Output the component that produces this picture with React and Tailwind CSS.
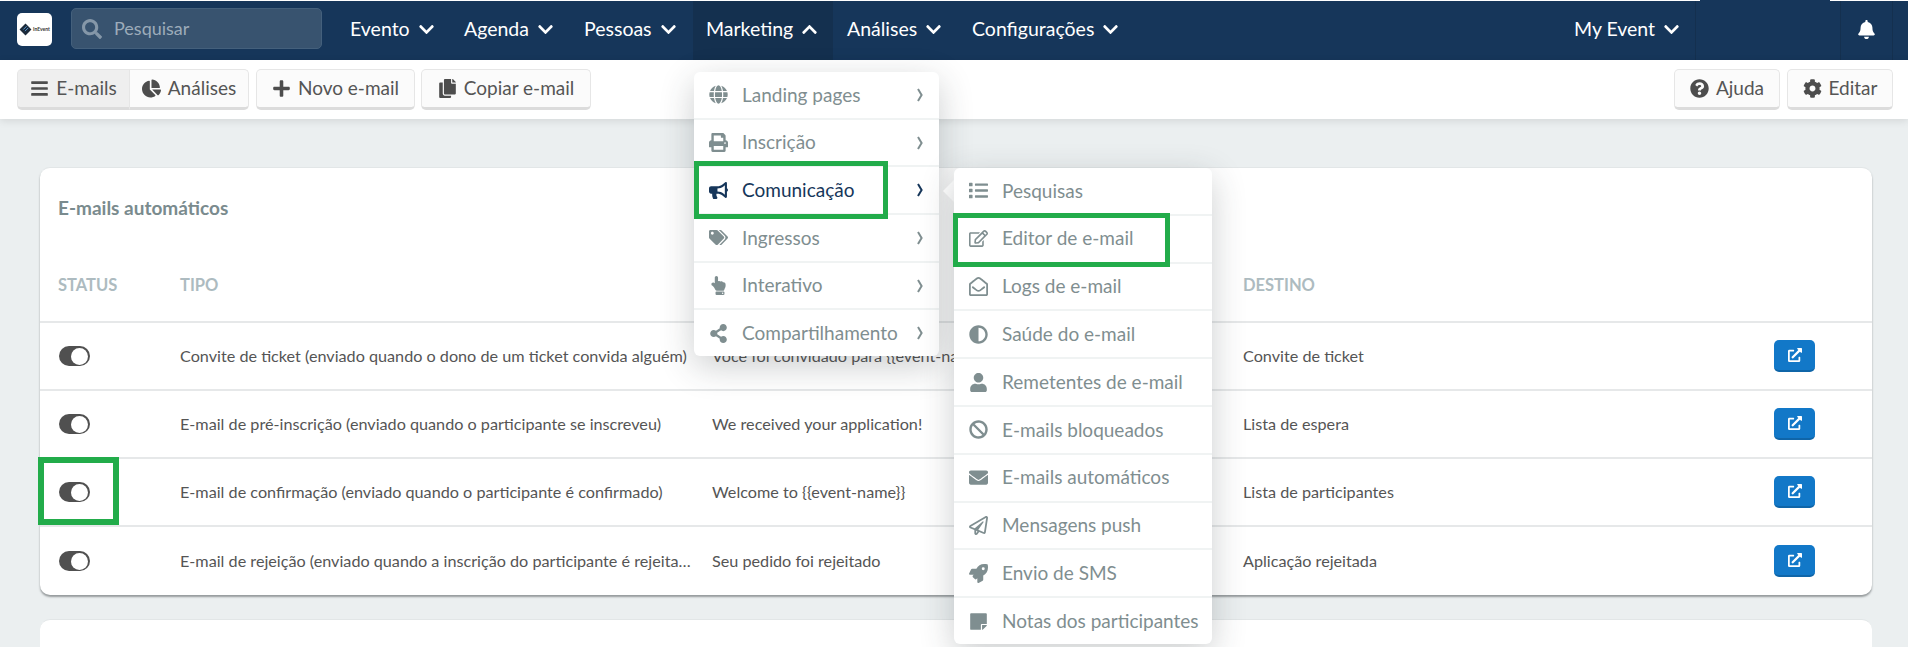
import {
  FaSearch, FaChevronDown, FaChevronUp, FaBell, FaBars, FaChartPie, FaPlus, FaCopy, FaQuestionCircle, FaCog,
  FaGlobe, FaPrint, FaBullhorn, FaTags, FaHandPointUp, FaShareAlt, FaList, FaRegEdit, FaRegEnvelopeOpen,
  FaAdjust, FaUser, FaBan, FaEnvelope, FaRegPaperPlane, FaRocket, FaStickyNote, FaExternalLinkAlt,
} from "react-icons/fa"

const NAV = [
  { label: "Evento", cls: "w-[114px]" },
  { label: "Agenda", cls: "w-[120px]" },
  { label: "Pessoas", cls: "w-[109px]" },
  { label: "Marketing", cls: "w-[140px] pl-[13px] bg-[#14304f]", open: true },
  { label: "Análises", cls: "w-[139px] pl-[14px]" },
  { label: "Configurações", cls: "" },
]

const MENU_MARKETING = [
  { label: "Landing pages", icon: FaGlobe },
  { label: "Inscrição", icon: FaPrint },
  { label: "Comunicação", icon: FaBullhorn, active: true },
  { label: "Ingressos", icon: FaTags },
  { label: "Interativo", icon: FaHandPointUp },
  { label: "Compartilhamento", icon: FaShareAlt },
]

const MENU_COMUNICACAO = [
  { label: "Pesquisas", icon: FaList },
  { label: "Editor de e-mail", icon: FaRegEdit },
  { label: "Logs de e-mail", icon: FaRegEnvelopeOpen },
  { label: "Saúde do e-mail", icon: FaAdjust },
  { label: "Remetentes de e-mail", icon: FaUser },
  { label: "E-mails bloqueados", icon: FaBan },
  { label: "E-mails automáticos", icon: FaEnvelope },
  { label: "Mensagens push", icon: FaRegPaperPlane },
  { label: "Envio de SMS", icon: FaRocket },
  { label: "Notas dos participantes", icon: FaStickyNote },
]

const ROWS = [
  { tipo: "Convite de ticket (enviado quando o dono de um ticket convida alguém)", assunto: "Você foi convidado para {{event-name}}", destino: "Convite de ticket" },
  { tipo: "E-mail de pré-inscrição (enviado quando o participante se inscreveu)", assunto: "We received your application!", destino: "Lista de espera" },
  { tipo: "E-mail de confirmação (enviado quando o participante é confirmado)", assunto: "Welcome to {{event-name}}", destino: "Lista de participantes" },
  { tipo: "E-mail de rejeição (enviado quando a inscrição do participante é rejeitada)", assunto: "Seu pedido foi rejeitado", destino: "Aplicação rejeitada" },
]

function Angle({ className }) {
  return (
    <svg viewBox="0 0 6 14" className={className} fill="none" stroke="currentColor" strokeWidth="2">
      <path d="M1 1 L4.6 7 L1 13" />
    </svg>
  )
}

function Btn({ icon: Icon, children, className = "bg-[#fbfbfb]" }) {
  return (
    <button className={`h-[41px] flex items-center justify-center gap-[7px] rounded-[5px] border border-[#e6e6e6] border-b-[3px] border-b-[#dcdcdc] text-[19px] text-[#555] ${className}`}>
      <Icon className="text-[#4d4d4d] text-[19px]" />
      {children}
    </button>
  )
}

function Toggle() {
  return (
    <div className="w-[31px] h-[20px] rounded-full bg-[#505050] flex items-center justify-end pr-[2px]">
      <div className="w-[17px] h-[17px] rounded-full bg-white" />
    </div>
  )
}

function Dropdown({ items, chevrons, className }) {
  return (
    <div className={`absolute bg-white rounded-[6px] shadow-[0_10px_34px_rgba(40,50,55,0.24)] flex flex-col ${className}`}>
      {items.map((m, i) => {
        const Icon = m.icon
        const color = m.active ? "text-[#16365a]" : "text-[#7f8e90]"
        return (
          <div key={m.label} className={`flex-1 flex items-center ${color} ${i < items.length - 1 ? "border-b-2 border-[#f0f3f3]" : ""}`}>
            <div className="w-[48px] flex justify-center">
              <Icon className="text-[19px]" />
            </div>
            <span className="text-[19px] whitespace-nowrap">{m.label}</span>
            {chevrons && <Angle className="ml-auto mr-[16px] w-[6px] h-[14px]" />}
          </div>
        )
      })}
    </div>
  )
}

export default function App() {
  return (
    <div className="h-[658px] bg-white overflow-hidden font-['Lato',sans-serif]">
      <div className="relative h-[647px] bg-[#ebeff0] flex flex-col overflow-hidden">
        <div className="h-px bg-white shrink-0" />

        {/* top nav */}
        <header className="h-[59px] shrink-0 bg-[#16365a] flex items-center text-white relative">
          <div className="ml-[17px] mb-[2px] w-[35px] h-[33px] rounded-[5px] bg-white flex items-center justify-center gap-[1px]">
            <svg viewBox="0 0 12 12" className="w-[13px] h-[13px]">
              <path d="M6 0.5 L11.5 6 L6 11.5 L0.5 6 Z" fill="#1c2a3a" />
              <path d="M4 6 L7 3 M5.5 7.5 L8.5 4.5" stroke="#5a9bd8" strokeWidth="0.9" />
            </svg>
            <span className="text-[5px] font-bold text-[#333] leading-none">InEvent</span>
          </div>
          <div className="ml-[19px] mb-[4px] w-[251px] h-[41px] rounded-[5px] bg-[#38536f] border border-[#44607c] flex items-center text-[#9dacba] text-[18px]">
            <FaSearch className="ml-[10px] text-[20px] text-[#8597a8]" />
            <span className="ml-[12px]">Pesquisar</span>
          </div>
          <nav className="ml-[28px] flex h-full">
            {NAV.map((n) => (
              <div key={n.label} className={`flex items-center gap-[8px] text-[19.5px] pb-[3px] ${n.cls}`}>
                {n.label}
                {n.open ? <FaChevronUp className="text-[17px]" /> : <FaChevronDown className="text-[17px]" />}
              </div>
            ))}
          </nav>
          <div className="ml-auto flex h-full">
            <div className="w-[121px] flex items-center gap-[8px] text-[19.5px] pb-[3px]">
              My Event
              <FaChevronDown className="text-[17px]" />
            </div>
            <div className="w-[146px] border-x border-[#14304f]" />
            <div className="w-[52px] flex items-center justify-center border-r border-[#14304f] pb-[3px]">
              <FaBell className="text-[19px]" />
            </div>
            <div className="w-[15px]" />
          </div>
          <div className="absolute -top-px left-[1700px] w-[130px] h-px bg-[#16365a]" />
        </header>

        {/* toolbar */}
        <div className="h-[59px] shrink-0 bg-white shadow-[0_2px_8px_rgba(0,0,0,0.1)] relative flex items-center pl-[17px] pr-[15px]">
          <div className="flex">
            <Btn icon={FaBars} className="w-[113px] rounded-r-none bg-[#efefef]">E-mails</Btn>
            <Btn icon={FaChartPie} className="w-[119px] rounded-l-none border-l-0 bg-[#fbfbfb]">Análises</Btn>
          </div>
          <Btn icon={FaPlus} className="ml-[7px] w-[159px] bg-[#fbfbfb]">Novo e-mail</Btn>
          <Btn icon={FaCopy} className="ml-[6px] w-[170px] bg-[#fbfbfb]">Copiar e-mail</Btn>
          <Btn icon={FaQuestionCircle} className="ml-auto w-[106px] bg-[#fbfbfb]">Ajuda</Btn>
          <Btn icon={FaCog} className="ml-[7px] w-[106px] bg-[#fbfbfb]">Editar</Btn>
        </div>

        {/* main */}
        <main className="pt-[48px] pl-[40px] pr-[36px]">
          <section className="bg-white rounded-[10px] border-t border-[#e2e6e7] shadow-[0_2px_2px_rgba(80,85,88,0.55)]">
            <h2 className="h-[82px] flex items-center pl-[18px] pb-px text-[19px] font-bold text-[#7a8b8e]">E-mails automáticos</h2>
            <div className="h-[73px] flex items-center pl-[18px] text-[16.5px] font-bold text-[#adbbc0] border-b-2 border-[#e6e8e9]">
              <div className="w-[122px]">STATUS</div>
              <div className="w-[1063px]">TIPO</div>
              <div>DESTINO</div>
            </div>
            {ROWS.map((r, i) => (
              <div key={r.tipo} className={`h-[68px] flex items-center pl-[19px] text-[16.2px] text-[#555] ${i < ROWS.length - 1 ? "border-b-2 border-[#e6e8e9]" : ""}`}>
                <div className="w-[121px]"><Toggle /></div>
                <div className="w-[532px] pr-[18px] truncate">{r.tipo}</div>
                <div className="w-[531px] whitespace-nowrap">{r.assunto}</div>
                <div className="w-[531px]">{r.destino}</div>
                <button className="w-[41px] h-[32px] rounded-[5px] bg-[#1278c8] border-b-2 border-[#0f65a8] flex items-center justify-center text-white">
                  <FaExternalLinkAlt className="text-[14px]" />
                </button>
              </div>
            ))}
          </section>
          <section className="mt-[24px] h-[100px] bg-white rounded-[10px] border-t border-[#e2e6e7]" />
        </main>

        {/* open menus */}
        <div className="absolute left-[724px] top-[60px] w-0 h-0 border-x-[11px] border-x-transparent border-b-[12px] border-b-white" />
        <Dropdown items={MENU_MARKETING} chevrons className="left-[694px] top-[72px] w-[245px] h-[284px]" />
        <div className="absolute left-[943px] top-[180px] w-0 h-0 border-y-[11px] border-y-transparent border-r-[11px] border-r-white" />
        <Dropdown items={MENU_COMUNICACAO} className="left-[954px] top-[168px] w-[258px] h-[476px]" />

        {/* green annotation boxes */}
        <div className="absolute left-[694px] top-[161px] w-[194px] h-[58px] border-[5px] border-[#22ac4a]" />
        <div className="absolute left-[953px] top-[213px] w-[217px] h-[54px] border-[5px] border-[#22ac4a]" />
        <div className="absolute left-[38px] top-[457px] w-[81px] h-[68px] border-[6px] border-[#22ac4a]" />
      </div>
    </div>
  )
}
